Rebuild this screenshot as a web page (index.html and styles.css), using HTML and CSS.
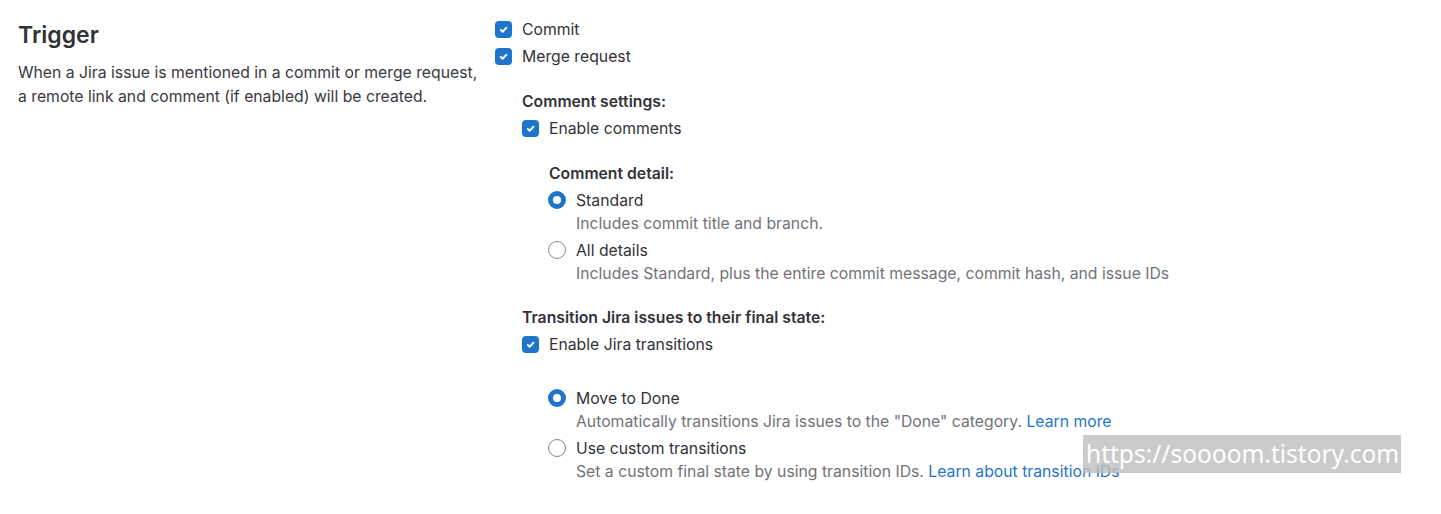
FILE: index.html
```html
<!DOCTYPE html>
<html>
<head>
<meta charset="utf-8">
<link rel="stylesheet" href="styles.css">
</head>
<body>
<div class="page">
  <div class="side">
    <h2 class="title">Trigger</h2>
    <p class="intro">When a Jira issue is mentioned in a commit or merge request, a remote link and comment (if enabled) will be created.</p>
  </div>
  <div class="main">
    <div class="opt"><span class="cb"><svg viewBox="0 0 16 16"><path d="M5.4 8.3l1.8 1.8 3.6-3.8" fill="none" stroke="#fff" stroke-width="1.8" stroke-linecap="round" stroke-linejoin="round"/></svg></span><span class="lbl">Commit</span></div>
    <div class="opt"><span class="cb"><svg viewBox="0 0 16 16"><path d="M5.4 8.3l1.8 1.8 3.6-3.8" fill="none" stroke="#fff" stroke-width="1.8" stroke-linecap="round" stroke-linejoin="round"/></svg></span><span class="lbl">Merge request</span></div>

    <div class="group g1">
      <div class="gtitle">Comment settings:</div>
      <div class="opt"><span class="cb"><svg viewBox="0 0 16 16"><path d="M5.4 8.3l1.8 1.8 3.6-3.8" fill="none" stroke="#fff" stroke-width="1.8" stroke-linecap="round" stroke-linejoin="round"/></svg></span><span class="lbl">Enable comments</span></div>
      <div class="group g2">
        <div class="gtitle">Comment detail:</div>
        <div class="ropt">
          <span class="rd on"></span>
          <div><div class="lbl">Standard</div><div class="help">Includes commit title and branch.</div></div>
        </div>
        <div class="ropt">
          <span class="rd"></span>
          <div><div class="lbl">All details</div><div class="help">Includes Standard, plus the entire commit message, commit hash, and issue IDs</div></div>
        </div>
      </div>
    </div>

    <div class="group g3">
      <div class="gtitle">Transition Jira issues to their final state:</div>
      <div class="opt"><span class="cb"><svg viewBox="0 0 16 16"><path d="M5.4 8.3l1.8 1.8 3.6-3.8" fill="none" stroke="#fff" stroke-width="1.8" stroke-linecap="round" stroke-linejoin="round"/></svg></span><span class="lbl">Enable Jira transitions</span></div>
      <div class="group g4">
        <div class="ropt">
          <span class="rd on"></span>
          <div><div class="lbl">Move to Done</div><div class="help">Automatically transitions Jira issues to the "Done" category. <a href="#">Learn more</a></div></div>
        </div>
        <div class="ropt">
          <span class="rd"></span>
          <div><div class="lbl">Use custom transitions</div><div class="help">Set a custom final state by using transition IDs. <a href="#">Learn about transition IDs</a></div></div>
        </div>
      </div>
    </div>
  </div>
</div>
<div class="wm">https://soooom.tistory.com</div>
</body>
</html>
```
FILE: styles.css
```css
html, body { margin: 0; padding: 0; background: #fff; }
body {
  font-family: Inter, "Noto Sans", sans-serif;
  color: #333238;
  font-size: 15.75px;
  line-height: 23px;
}
.page {
  display: flex;
  padding: 16px 0 0 18px;
}
.side { width: 477px; flex: none; }
.title {
  margin: 6px 0 0 0;
  font-size: 23px;
  font-weight: 600;
  line-height: 26px;
  color: #333238;
}
.intro {
  margin: 13px 0 0 0;
  max-width: 465px;
  font-size: 15.75px;
  line-height: 24px;
  color: #3a383f;
}
.opt {
  display: flex;
  align-items: center;
  height: 27px;
}
.cb {
  width: 17px; height: 17px;
  border-radius: 4px;
  background: #1f75cb;
  display: inline-flex;
  margin-right: 10px;
  flex: none;
}
.cb svg { width: 17px; height: 17px; }
.group { margin-left: 27px; }
.g1 { margin-top: 20px; }
.gtitle {
  font-weight: 600;
  height: 23px;
  line-height: 23px;
  margin-bottom: 2px;
}
.g2 { margin-top: 20px; }
.g2 .gtitle { margin-bottom: 4px; }
.g3 { margin-top: 21px; margin-left: 27px; }
.g4 { margin-top: 29px; }
.ropt {
  display: flex;
  align-items: flex-start;
  margin-bottom: 4px;
}
.rd {
  width: 18px; height: 18px;
  box-sizing: border-box;
  border-radius: 50%;
  border: 1px solid #89888d;
  margin: 2px 10px 0 -1px;
  flex: none;
  background: #fff;
}
.rd.on {
  border: 5px solid #1f75cb;
}
.help {
  color: #737278;
  line-height: 23px;
}
.help a { color: #1f75cb; text-decoration: none; }
.wm {
  position: absolute;
  left: 1083px; top: 435px;
  width: 318px; height: 38px;
  background: rgba(190,190,190,0.8);
  color: #fff;
  font-family: "Noto Sans", "Open Sans", sans-serif;
  font-size: 24.5px;
  line-height: 38px;
  padding-left: 3px;
  box-sizing: border-box;
  white-space: nowrap;
  overflow: hidden;
}
```
